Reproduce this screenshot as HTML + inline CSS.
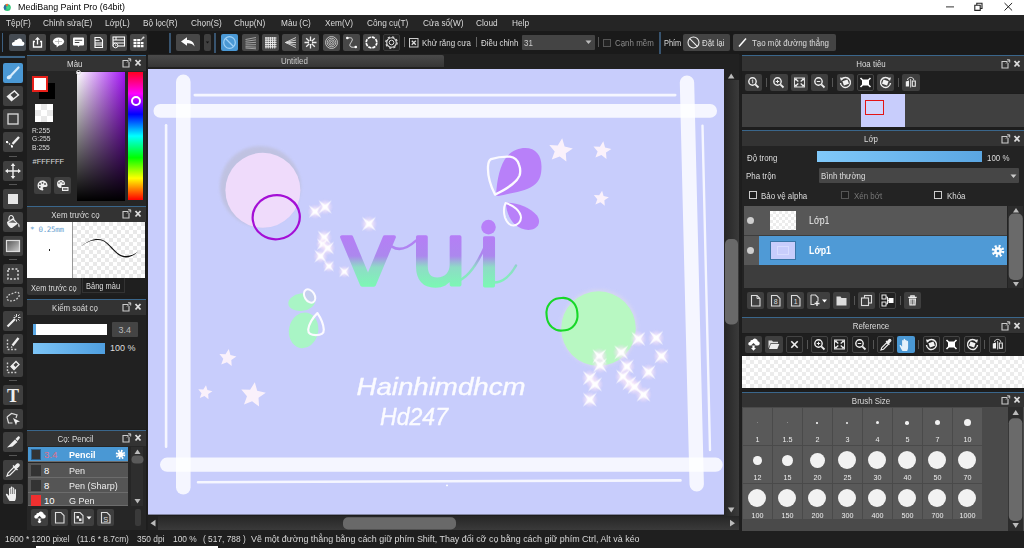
<!DOCTYPE html>
<html lang="vi">
<head>
<meta charset="utf-8">
<title>MediBang Paint Pro (64bit)</title>
<style>
*{box-sizing:border-box;margin:0;padding:0}
html,body{width:1024px;height:548px;overflow:hidden;background:#1e1e1e}
body{font-family:"Liberation Sans","DejaVu Sans",sans-serif;font-size:9px;color:#ddd;position:relative}
.abs,.abs>*{position:absolute}
#titlebar{left:0;top:0;width:1024px;height:15px;background:#fff;color:#000}
#titlebar .ttl{left:17.700px;top:1px;font-size:9.200px;line-height:13px;white-space:nowrap;transform:scaleX(.97);transform-origin:0 50%}
#menubar{left:0;top:15px;width:1024px;height:16px;background:#252525}
#menubar span{top:1px;font-size:9.500px;line-height:14px;color:#dcdcdc;white-space:nowrap;transform:scaleX(.87);transform-origin:0 50%}
#toolbar{left:0;top:31px;width:1024px;height:24px;background:#1a1a1a}
.tb{width:17px;height:17px;top:3px;background:#474747;border-radius:2px}
.tb.on{background:#4a98d4}
.tb svg{left:0;top:0;position:absolute}
.sx{display:inline-block;transform:scaleX(.88);transform-origin:0 50%}
.sxc{display:inline-block;transform:scaleX(.88);transform-origin:50% 50%}
.tbt{top:5.500px;font-size:9px;line-height:12px;color:#ddd;white-space:nowrap}
#tools{left:0;top:55px;width:26px;height:476px;background:#1d1d1d}
.tool{left:3px;width:20px;height:20px;background:#3f3f3f;border-radius:2px}
.tool.on{background:#4a98d4}
.tool svg{position:absolute;left:0;top:0}
.tsep{left:9px;width:8px;height:1px;background:#555}
.panel{background:#262626}
.phead{left:0;top:0;height:15px;background:#333;color:#ddd;font-size:9px;line-height:17px;text-align:center;overflow:hidden}
.chk4{--c:#ddd;background-color:#fff;background-image:linear-gradient(45deg,var(--c) 25%,transparent 25%,transparent 75%,var(--c) 75%),linear-gradient(45deg,var(--c) 25%,transparent 25%,transparent 75%,var(--c) 75%);background-size:6px 6px;background-position:0 0,3px 3px}
.hic{position:absolute}
.brow{left:2px;width:100px;height:15px;background:#555;border-bottom:1px solid #6c6c6c}
.brow *{position:absolute}
.brow i{left:2.500px;top:2px;width:10px;height:11px}
.brow b{left:16px;top:2px;font-size:9.500px;line-height:11px;font-weight:normal;color:#fff}
.brow em{left:40.500px;top:2px;font-size:9.500px;line-height:11px;font-style:normal;color:#eee;white-space:nowrap;transform:scaleX(.95);transform-origin:0 50%}
.tool.dk{background:#222;border:1px solid #444}
.tool.dk svg{left:-1px;top:-1px}
.chk5{background-color:#fff;background-image:linear-gradient(45deg,#ececec 25%,transparent 25%,transparent 75%,#ececec 75%),linear-gradient(45deg,#ececec 25%,transparent 25%,transparent 75%,#ececec 75%);background-size:8px 8px;background-position:0 0,4px 4px}
.bs{width:29px;background:#595959}
.bs *{position:absolute}
.bs i{border-radius:50%;background:#f2f2f2}
.bs b{left:0;width:29px;text-align:center;font-weight:normal;font-size:8px;line-height:10px;color:#eee;transform:scaleX(.9)}
.pline{height:1.500px;background:#3a668b}
#status{left:0;top:529.500px;width:1024px;height:18.500px;background:#1f1f1f;color:#d8d8d8}
#status span{top:2px;font-size:9.500px;line-height:13px;white-space:nowrap;transform:scaleX(.88);transform-origin:0 50%}
</style>
</head>
<body>
<div id="titlebar" class="abs">
  <svg style="left:3px;top:3px" width="9" height="9" viewBox="0 0 9 9"><circle cx="4.300" cy="4.400" r="3.500" fill="#36c67c"/><path d="M4.300 4.400L2.500 1.400A3.500 3.500 0 0 0 2 7.200Z" fill="#2c6fa8"/><path d="M4.300 4.400L2.300 1.500A3.500 3.500 0 0 1 5.200 1Z" fill="#ea6f3a"/><circle cx="4.900" cy="4.600" r="1.700" fill="#3fd98a"/></svg>
  <span class="ttl">MediBang Paint Pro (64bit)</span>
  <svg style="left:940px;top:0" width="84" height="15" viewBox="940 0 84 15"><path d="M946 6.900h8" stroke="#333" stroke-width="1" fill="none"/><path d="M974.800 5.200h5.400v5.200h-5.400z M976.800 5v-1.700h5.200v5.200h-1.700" stroke="#222" stroke-width="1.100" fill="none"/><path d="M1004.500 3l7.600 7.500M1012.100 3l-7.600 7.500" stroke="#222" stroke-width="1" fill="none"/></svg>
</div>
<div id="menubar" class="abs">
  <span style="left:6px">Tệp(F)</span><span style="left:43px">Chỉnh sửa(E)</span><span style="left:105px">Lớp(L)</span><span style="left:143px">Bộ lọc(R)</span><span style="left:191px">Chọn(S)</span><span style="left:234px">Chụp(N)</span><span style="left:281px">Màu (C)</span><span style="left:325px">Xem(V)</span><span style="left:367px">Công cụ(T)</span><span style="left:423px">Cửa sổ(W)</span><span style="left:476px">Cloud</span><span style="left:512px">Help</span>
</div>
<div id="toolbar" class="abs">
  <div style="left:2px;top:2px;width:1px;height:19px;background:#3d5f80"></div>
  <div style="left:149px;top:0;width:20px;height:23px;background:#181818"></div>
  <!-- file group -->
  <div class="tb" style="left:9px;background:#454b52"><svg width="17" height="17" viewBox="0 0 17 17"><path d="M4.500 12h8.500a2.300 2.300 0 0 0 .3-4.600a3 3 0 0 0-5.600-1.400a2 2 0 0 0-2.400 2a2 2 0 0 0-.8 4z" fill="#fff"/><path d="M4.500 12h8.500a2.300 2.300 0 0 0 1.500-.6h-11.500z" fill="#bcd8f2"/></svg></div>
  <div class="tb" style="left:29px"><svg width="17" height="17" viewBox="0 0 17 17"><path d="M6 7.500h-1.500v5.500h8v-5.500h-1.500" fill="none" stroke="#fff" stroke-width="1.300"/><path d="M8.500 10.500v-6.500" stroke="#fff" stroke-width="1.300"/><path d="M5.800 5.800l2.700-2.800l2.700 2.800z" fill="#fff"/></svg></div>
  <div class="tb" style="left:49.500px"><svg width="17" height="17" viewBox="0 0 17 17"><ellipse cx="8.500" cy="7.500" rx="5.600" ry="4" fill="#fff"/><path d="M6.500 10.500l.3 3l2.500-2.600z" fill="#fff"/><path d="M5 7.500h7M8.500 5v5" stroke="#aaa" stroke-width=".7"/></svg></div>
  <div class="tb" style="left:69.700px"><svg width="17" height="17" viewBox="0 0 17 17"><rect x="3" y="3.500" width="11" height="8" rx="1" fill="#fff"/><path d="M7.300 11.300l1.200 1.700l1.200-1.700z" fill="#fff"/><path d="M4.800 6.200h7.400M4.800 8.500h4.500" stroke="#474747" stroke-width="1.100"/></svg></div>
  <div class="tb" style="left:90px"><svg width="17" height="17" viewBox="0 0 17 17"><path d="M5 3.500h5.200l2.300 2.300v7.700h-7.500z" fill="none" stroke="#fff" stroke-width="1.100"/><path d="M5 6.300h4.500M5 9h7.500M5 11h7.500" stroke="#fff" stroke-width="1"/></svg></div>
  <div class="tb" style="left:110px"><svg width="17" height="17" viewBox="0 0 17 17"><rect x="3" y="3" width="11.500" height="9" fill="none" stroke="#fff" stroke-width="1.100"/><path d="M3 6h11.500M3 9h11.500M6 3v3" stroke="#fff" stroke-width="1"/><circle cx="5.500" cy="11.500" r="2.300" fill="#474747" stroke="#fff" stroke-width=".9"/><path d="M5.500 10.300v1.300h1.100" stroke="#fff" stroke-width=".7" fill="none"/></svg></div>
  <div class="tb" style="left:130.300px"><svg width="17" height="17" viewBox="0 0 17 17"><path d="M3.500 5h3v2.300h-3zM7.200 5h3v2.300h-3zM3.500 8h3v2.300h-3zM7.200 8h3v2.300h-3zM10.900 8h2.600v2.300h-2.600zM3.500 11h3v2.300h-3zM7.200 11h3v2.300h-3zM10.900 11h2.600v2.300h-2.600z" fill="#fff"/><path d="M10.500 6.500l2.800-2.800" stroke="#ccc" stroke-width="1.200"/><circle cx="13.500" cy="3.500" r="1" fill="#ddd"/></svg></div>
  <!-- undo group -->
  <div style="left:169px;top:2px;width:1.500px;height:20px;background:#38546f"></div>
  <div class="tb" style="left:175.500px;width:24px"><svg width="24" height="17" viewBox="0 0 24 17"><path d="M5 7.500l6-4.200v2.700c4.500 0 7 2.200 7.500 6.500c-1.500-2.300-3.700-3.300-7.500-3.200v2.500z" fill="#fff"/></svg></div>
  <div class="tb" style="left:204px;width:6.500px;background:#3f3f3f"><svg width="7" height="17" viewBox="0 0 7 17"><path d="M1.800 7.500h3.400l-1.700 2z" fill="#111"/></svg></div>
  <div style="left:214px;top:2px;width:1.500px;height:20px;background:#38546f"></div>
  <!-- snap group -->
  <div class="tb on" style="left:221px"><svg width="17" height="17" viewBox="0 0 17 17"><circle cx="8.500" cy="8.500" r="5.800" fill="none" stroke="#9fd0f5" stroke-width="1.200"/><path d="M4.500 4.500l8 8" stroke="#9fd0f5" stroke-width="1.200"/></svg></div>
  <div class="tb" style="left:241.500px"><svg width="17" height="17" viewBox="0 0 17 17"><path d="M3.500 5.500l10.500-2M3.500 7.300l10.500-1.400M3.500 9.100l10.500-.8M3.500 10.900l10.500-.2M3.500 12.700l10.500.4M3.500 14l10.500.8" stroke="#bbb" stroke-width=".8"/></svg></div>
  <div class="tb" style="left:261.700px"><svg width="17" height="17" viewBox="0 0 17 17"><path d="M4 3v11.500M6.200 3v11.500M8.400 3v11.500M10.600 3v11.500M12.800 3v11.500M3 4h11.500M3 6.200h11.500M3 8.400h11.500M3 10.600h11.500M3 12.800h11.500" stroke="#eee" stroke-width="1"/></svg></div>
  <div class="tb" style="left:282px"><svg width="17" height="17" viewBox="0 0 17 17"><path d="M3.500 8.500l10.500-5M3.500 8.500l10.500-2.500M3.500 8.500h10.500M3.500 8.500l10.500 2.500M3.500 8.500l10.500 5" stroke="#ddd" stroke-width=".9"/></svg></div>
  <div class="tb" style="left:302px"><svg width="17" height="17" viewBox="0 0 17 17"><path d="M8.500 2.500v4.500M8.500 10v4.500M2.500 8.500h4.500M10 8.500h4.500M4.200 4.200l3.100 3.100M9.700 9.700l3.100 3.100M12.800 4.200l-3.100 3.100M7.300 9.700l-3.100 3.100" stroke="#eee" stroke-width="1.300"/></svg></div>
  <div class="tb" style="left:322.500px"><svg width="17" height="17" viewBox="0 0 17 17"><g fill="none" stroke="#ddd" stroke-width=".8"><circle cx="8.500" cy="8.500" r="6"/><circle cx="8.500" cy="8.500" r="4.300"/><circle cx="8.500" cy="8.500" r="2.700"/><circle cx="8.500" cy="8.500" r="1.100"/></g></svg></div>
  <div class="tb" style="left:342.700px"><svg width="17" height="17" viewBox="0 0 17 17"><path d="M4.500 4c5-1 6 1 3.500 4.500s-1 5.500 4.500 4.500" fill="none" stroke="#ddd" stroke-width="1"/><circle cx="4.300" cy="4" r="1.300" fill="#fff"/><circle cx="12.800" cy="13" r="1.300" fill="#fff"/></svg></div>
  <div class="tb" style="left:363px"><svg width="17" height="17" viewBox="0 0 17 17"><circle cx="8.500" cy="8.500" r="5.300" fill="none" stroke="#fff" stroke-width="1.700" stroke-dasharray="3.200 .9"/></svg></div>
  <div class="tb" style="left:383px;background:#262626;border:1px solid #3a3a3a"><svg width="15" height="15" viewBox="1 1 15 15"><circle cx="8.500" cy="8.500" r="4.800" fill="none" stroke="#ddd" stroke-width="1.100"/><circle cx="8.500" cy="8.500" r="5.700" fill="none" stroke="#ddd" stroke-width="1.200" stroke-dasharray="2.200 2.270"/><circle cx="8.500" cy="8.500" r="2.300" fill="none" stroke="#ddd" stroke-width="1"/></svg></div>
  <div style="left:404px;top:6px;width:1px;height:10px;background:#666"></div>
  <svg style="left:409px;top:7px" width="10" height="10" viewBox="0 0 10 10"><rect x=".5" y=".5" width="8.500" height="8.500" fill="#222" stroke="#ccc" stroke-width="1"/><path d="M2.800 2.800l4 4M6.800 2.800l-4 4" stroke="#ddd" stroke-width="1.300"/></svg>
  <span class="tbt sx" style="left:421.500px">Khử răng cưa</span>
  <div style="left:475.500px;top:6px;width:1px;height:10px;background:#666"></div>
  <span class="tbt sx" style="left:481px">Điều chỉnh</span>
  <div style="left:521.700px;top:3.500px;width:73px;height:15.500px;background:#444;border-radius:1px"></div>
  <span class="tbt sx" style="left:524px;color:#ccc">31</span>
  <svg style="left:585px;top:9px" width="7" height="5" viewBox="0 0 7 5"><path d="M.5 .5h6l-3 3.500z" fill="#bbb"/></svg>
  <div style="left:597.500px;top:6px;width:1px;height:10px;background:#555"></div>
  <div style="left:602.500px;top:7.500px;width:8.500px;height:8.500px;border:1px solid #555;background:#222"></div>
  <span class="tbt sx" style="left:615px;color:#8a8a8a">Cạnh mềm</span>
  <div style="left:659px;top:1px;width:1.500px;height:22px;background:#38546f"></div>
  <span class="tbt sx" style="left:663.700px;transform:scaleX(.82)">Phím</span>
  <div class="tb" style="left:682.500px;width:47.500px;background:#444"><svg width="17" height="17" viewBox="0 0 17 17" style="left:2px"><circle cx="8.500" cy="8.500" r="5.500" fill="none" stroke="#eee" stroke-width="1.100"/><path d="M4.700 4.700l7.600 7.600" stroke="#eee" stroke-width="1.100"/></svg></div>
  <span class="tbt sx" style="left:701.500px">Đặt lại</span>
  <div class="tb" style="left:733px;width:103px;background:#444"><svg width="14" height="17" viewBox="0 0 14 17" style="left:3px"><path d="M3 12.500l7-8" stroke="#fff" stroke-width="1.500"/></svg></div>
  <span class="tbt sx" style="left:752px">Tạo một đường thẳng</span>
</div>
<div id="tools" class="abs">
  <div style="left:0;top:1px;width:25px;height:1.500px;background:#3d6486"></div>
  <div class="tool on" style="top:7.5px"><svg width="20" height="20" viewBox="0 0 20 20"><path d="M15.500 4.500l-7.500 8" stroke="#d8ecfb" stroke-width="2.200" stroke-linecap="round"/><ellipse cx="6.200" cy="14.200" rx="2.600" ry="1.900" transform="rotate(-25 6.200 14.200)" fill="#d8ecfb"/></svg></div>
  <div class="tool" style="top:30.8px"><svg width="20" height="20" viewBox="0 0 20 20"><path d="M4.500 10.500l7-5.500l4 4l-7 5.500z" fill="none" stroke="#eee" stroke-width="1.400"/><path d="M4.500 10.500l2.500-2l4 4l-2.500 2z" fill="#eee"/></svg></div>
  <div class="tool" style="top:54.1px"><svg width="20" height="20" viewBox="0 0 20 20"><rect x="5" y="5" width="10" height="10" fill="none" stroke="#ddd" stroke-width="1.300"/></svg></div>
  <div class="tool" style="top:77.4px"><svg width="20" height="20" viewBox="0 0 20 20"><path d="M16 5l-6.500 7" stroke="#eee" stroke-width="2.400"/><path d="M4 10l5 4" stroke="#eee" stroke-width="1.200" stroke-dasharray="1.500 1"/><rect x="3" y="9" width="2" height="2" fill="#fff"/><rect x="8" y="13.500" width="2" height="2" fill="#fff"/></svg></div>
  <div class="tsep" style="top:100.7px"></div>
  <div class="tool" style="top:105.7px"><svg width="20" height="20" viewBox="0 0 20 20"><path d="M10 3.500v13M3.500 10h13" stroke="#eee" stroke-width="1.400"/><path d="M10 2l2.300 3h-4.600zM10 18l2.300-3h-4.600zM2 10l3-2.300v4.600zM18 10l-3-2.300v4.600z" fill="#eee"/></svg></div>
  <div class="tsep" style="top:129.0px"></div>
  <div class="tool" style="top:134.0px"><svg width="20" height="20" viewBox="0 0 20 20"><rect x="5" y="5" width="10" height="10" fill="#e6e6e6"/></svg></div>
  <div class="tool" style="top:157.3px"><svg width="20" height="20" viewBox="0 0 20 20"><path d="M4 10l6-4l5 5.500l-6 4.500c-2 .5-5-3-5-6z" fill="#eee"/><path d="M6 8.500c-.5-3 .5-5 2-5s2.500 1.500 3 4" fill="none" stroke="#eee" stroke-width="1.100"/><path d="M15.500 11c1 1.500 1.500 3 .7 4.500c-1-.5-1.200-2.500-.7-4.500z" fill="#eee"/><path d="M5.500 10.500l4.500-2.500l3.500 3z" fill="#666"/></svg></div>
  <div class="tool" style="top:180.6px"><svg width="20" height="20" viewBox="0 0 20 20"><defs><linearGradient id="gg" x1="0" y1="0" x2="1" y2="1"><stop offset="0" stop-color="#555"/><stop offset="1" stop-color="#ccc"/></linearGradient></defs><rect x="3.500" y="4.500" width="13" height="11" fill="url(#gg)" stroke="#ddd" stroke-width="1.200"/></svg></div>
  <div class="tsep" style="top:203.9px"></div>
  <div class="tool" style="top:208.9px"><svg width="20" height="20" viewBox="0 0 20 20"><rect x="5" y="5" width="10" height="10" fill="none" stroke="#ddd" stroke-width="1.500" stroke-dasharray="2 1.700"/></svg></div>
  <div class="tool" style="top:232.2px"><svg width="20" height="20" viewBox="0 0 20 20"><path d="M4 11c0-3 3-3.500 5.500-4.500s5-2.500 6.500 0s-2 6-5 7s-7 .5-7-2.500z" fill="none" stroke="#ccc" stroke-width="1.300" stroke-dasharray="1.800 1.500"/></svg></div>
  <div class="tool" style="top:255.5px"><svg width="20" height="20" viewBox="0 0 20 20"><path d="M4.500 15.500l7.500-7.500" stroke="#eee" stroke-width="2.200"/><path d="M13.500 3v3M13.500 8.500v2M10.500 6.500h2M15 6.500h2.500M11.500 4.500l1 1M15 5l1.500-1.500M15 8l1.500 1.500" stroke="#ddd" stroke-width="1"/></svg></div>
  <div class="tool" style="top:278.8px"><svg width="20" height="20" viewBox="0 0 20 20"><path d="M4.500 5.500v10h10" fill="none" stroke="#ccc" stroke-width="1.400" stroke-dasharray="1.800 1.600"/><path d="M15.500 4l-6 7.500" stroke="#eee" stroke-width="2.400"/><path d="M8.500 12l-.8 2l2-.8z" fill="#eee"/></svg></div>
  <div class="tool" style="top:302.1px"><svg width="20" height="20" viewBox="0 0 20 20"><path d="M4.500 5.500v10h10" fill="none" stroke="#ccc" stroke-width="1.400" stroke-dasharray="1.800 1.600"/><path d="M8 9.500l5-5l3 3l-5 5z" fill="none" stroke="#eee" stroke-width="1.300"/><path d="M8 9.500l2-2l3 3l-2 2z" fill="#eee"/></svg></div>
  <div class="tsep" style="top:325.4px"></div>
  <div class="tool" style="top:330.4px"><svg width="20" height="20" viewBox="0 0 20 20"><text x="10" y="16.500" text-anchor="middle" font-family="Liberation Serif,serif" font-weight="bold" font-size="18" fill="#eee">T</text></svg></div>
  <div class="tool" style="top:353.7px"><svg width="20" height="20" viewBox="0 0 20 20"><path d="M4 8l4.500-3.500l5.500 1.500l-1 3M4 8l1.500 6h4" fill="none" stroke="#ddd" stroke-width="1.200"/><path d="M10 9l7 3.500l-3 .8l-1 3z" fill="#eee"/></svg></div>
  <div class="tool" style="top:377.0px"><svg width="20" height="20" viewBox="0 0 20 20"><path d="M4 15.500l8-8l2.500 2.500l-5 4.500z" fill="#eee"/><path d="M12.500 7l2.500-2.500c1-.8 2.500.7 1.700 1.700l-2.200 2.800z" fill="#eee"/></svg></div>
  <div class="tsep" style="top:400.3px"></div>
  <div class="tool" style="top:405.3px"><svg width="20" height="20" viewBox="0 0 20 20"><path d="M4 16l1-3l6-6l2 2l-6 6z" fill="none" stroke="#eee" stroke-width="1.200"/><path d="M10 5.500l4.500 4.500M11.500 7l2.500-2.800c1.200-1.200 3 .6 1.800 1.800l-2.800 2.500z" stroke="#eee" stroke-width="1.300" fill="#eee"/></svg></div>
  <div class="tool" style="top:428.6px"><svg width="20" height="20" viewBox="0 0 20 20"><path d="M6.500 17c-1-1.500-2.500-4-3.500-6c-.5-1.200 1-1.700 1.700-.7l1.300 1.700v-7c0-1.200 1.600-1.200 1.700 0v-1.500c0-1.200 1.700-1.200 1.800 0v1c0-1.200 1.700-1.200 1.800 0v1.500c0-1.200 1.600-1.200 1.700 0v6.500c0 2-.5 3.500-1.200 4.500z" fill="#eee"/><path d="M7.700 5v5M9.500 4v6M11.300 4.500v5.500" stroke="#3f3f3f" stroke-width=".6"/></svg></div>
</div>
<!-- LEFT PANELS -->
<div id="leftp" class="abs" style="left:26px;top:55px;width:121px;height:476px;background:#1d1d1d">
  <!-- color panel: leftp origin = (26,55) -->
  <div class="pline" style="left:1px;top:0;width:119px"></div>
  <div class="phead" style="left:1px;top:1px;width:119px"><span class="sxc" style="position:relative;left:-12px">Màu</span></div>
  <svg class="hic" style="left:96px;top:3px" width="20" height="10" viewBox="0 0 20 10"><path d="M6 2.500h-5v6.500h6v-5" fill="none" stroke="#ccc" stroke-width="1.100"/><path d="M5 4.500l3.500-3.500M6 .8h2.700v2.700" fill="none" stroke="#ccc" stroke-width="1"/><path d="M13.500 2l5 5.500M18.500 2l-5 5.500" stroke="#ddd" stroke-width="1.800"/></svg>
  <div class="panel" style="left:1px;top:16px;width:119px;height:135px"></div>
  <div style="left:13px;top:28px;width:16px;height:16px;background:#000"></div>
  <div style="left:6px;top:21px;width:16px;height:16px;background:#fff;border:2px solid #e8201a"></div>
  <div class="chk4" style="left:8.500px;top:49px;width:18px;height:18px;background-size:12px 12px;background-position:0 0,6px 6px;--c:#e9e9e9"></div>
  <span class="sx" style="left:6px;top:72.400px;font-size:7.500px;line-height:8.100px;color:#ddd;transform:scaleX(.9)">R:255<br>G:255<br>B:255</span>
  <span style="left:6.500px;top:101.500px;font-size:7.500px;line-height:9px;color:#ddd">#FFFFFF</span>
  <div class="tool" style="left:8px;top:122px;width:17px;height:17px"><svg width="17" height="17" viewBox="0 0 17 17"><path d="M8.500 3.500a5 5 0 1 0 0 10c1.200 0 1-1.200.5-1.800s0-1.700 1.200-1.700h1.800c1 0 1.500-.8 1.500-1.700c0-2.800-2.300-4.800-5-4.800z" fill="#eee"/><circle cx="6" cy="7" r=".9" fill="#444"/><circle cx="8.500" cy="5.800" r=".9" fill="#444"/><circle cx="11" cy="7" r=".9" fill="#444"/><circle cx="5.800" cy="10" r=".9" fill="#444"/></svg></div>
  <div class="tool" style="left:28px;top:122px;width:17px;height:17px"><svg width="17" height="17" viewBox="0 0 17 17"><path d="M7 3a4 4 0 1 0 0 8c1 0 .8-1 .4-1.500s0-1.400 1-1.400h1.400c.8 0 1.200-.6 1.200-1.300c0-2.200-1.800-3.800-4-3.800z" fill="#eee"/><circle cx="5" cy="6" r=".8" fill="#444"/><circle cx="7" cy="4.800" r=".8" fill="#444"/><circle cx="9" cy="6" r=".8" fill="#444"/><rect x="8" y="10" width="6.500" height="4" fill="#eee"/><rect x="9" y="11" width="4.500" height="2" fill="#777"/></svg></div>
  <div style="left:51px;top:16.500px;width:48px;height:129px;background:linear-gradient(to bottom,rgba(0,0,0,0),#000),linear-gradient(to right,#fff,#a315f5)"></div>
  <div style="left:49.500px;top:15px;width:5px;height:5px;border-radius:50%;border:1px solid #ddd"></div>
  <div style="left:102px;top:17px;width:15px;height:128px;background:linear-gradient(to bottom,#ff0020 0%,#ff00ff 17%,#0000ff 33%,#00ffff 50%,#00ff00 67%,#ffff00 83%,#ff0000 100%)"></div>
  <div style="left:104.500px;top:40.500px;width:10.500px;height:10.500px;border-radius:50%;border:2px solid #fff"></div>
  <!-- brush preview panel -->
  <div class="pline" style="left:1px;top:151px;width:119px"></div>
  <div class="phead" style="left:1px;top:152px;width:119px"><span class="sxc" style="position:relative;left:-11px">Xem trước cọ</span></div>
  <svg class="hic" style="left:96px;top:154px" width="20" height="10" viewBox="0 0 20 10"><path d="M6 2.500h-5v6.500h6v-5" fill="none" stroke="#ccc" stroke-width="1.100"/><path d="M5 4.500l3.500-3.500M6 .8h2.700v2.700" fill="none" stroke="#ccc" stroke-width="1"/><path d="M13.500 2l5 5.500M18.500 2l-5 5.500" stroke="#ddd" stroke-width="1.800"/></svg>
  <div style="left:1px;top:167px;width:45px;height:55.500px;background:#fff"></div>
  <div style="left:46px;top:167px;width:1px;height:55.500px;background:#999"></div>
  <div class="chk4" style="left:47px;top:167px;width:72px;height:55.500px;background-size:8px 8px;background-position:0 0,4px 4px;--c:#e9e9e9"></div>
  <span style="left:4px;top:169.500px;font-size:7.500px;line-height:9px;color:#6b9fd0;font-family:'DejaVu Sans Mono','Liberation Mono',monospace;letter-spacing:-.3px">* 0.25mm</span>
  <div style="left:22.700px;top:194.200px;width:1.600px;height:1.600px;background:#222"></div>
  <svg style="left:47px;top:167px" width="72" height="56" viewBox="0 0 72 56"><path d="M8 24.500c6-5 11-7.500 17-7.500c7 0 11 5.500 16 10.500s8 6.500 12 6.500c4 0 8-1.500 12-4.500c-4 4-8 6-12 6c-5 0-8-2.500-13-7.500s-8-10-15-10c-6 0-11 2-17 6.500z" fill="#111"/></svg>
  <div style="left:1px;top:223px;width:119px;height:17px;background:#1f1f1f"></div>
  <div style="left:1px;top:223px;width:54px;height:16.500px;background:#343434;border-radius:0 0 2px 2px"></div>
  <span class="sx" style="left:5px;top:227.700px;font-size:8.500px;line-height:10px;color:#ddd">Xem trước cọ</span>
  <div style="left:56px;top:223px;width:42.500px;height:14.500px;border:1px solid #333;border-top:0"></div>
  <span class="sx" style="left:59.500px;top:226.400px;font-size:8.500px;line-height:10px;color:#ddd">Bảng màu</span>
  <!-- brush control -->
  <div class="pline" style="left:1px;top:244px;width:119px"></div>
  <div class="phead" style="left:1px;top:245px;width:119px"><span class="sxc" style="position:relative;left:-11px">Kiểm soát cọ</span></div>
  <svg class="hic" style="left:96px;top:247px" width="20" height="10" viewBox="0 0 20 10"><path d="M6 2.500h-5v6.500h6v-5" fill="none" stroke="#ccc" stroke-width="1.100"/><path d="M5 4.500l3.500-3.500M6 .8h2.700v2.700" fill="none" stroke="#ccc" stroke-width="1"/><path d="M13.500 2l5 5.500M18.500 2l-5 5.500" stroke="#ddd" stroke-width="1.800"/></svg>
  <div class="panel" style="left:1px;top:260px;width:119px;height:114px;background:#212121"></div>
  <div style="left:7px;top:269px;width:74px;height:11px;background:#fff;border-left:3.500px solid #5aa9e6"></div>
  <div style="left:86px;top:267px;width:25.500px;height:15px;background:#444;border-radius:1px"></div>
  <span style="left:86px;top:269.500px;width:25.500px;text-align:center;font-size:9px;line-height:10px;color:#bbb">3.4</span>
  <div style="left:7px;top:287.500px;width:72px;height:11.500px;background:linear-gradient(to right,#7cc4f6,#4f9fe0)"></div>
  <span style="left:84px;top:288px;font-size:9px;line-height:10px;color:#ddd">100 %</span>
  <!-- brush list -->
  <div class="pline" style="left:1px;top:375px;width:119px"></div>
  <div class="phead" style="left:1px;top:376px;width:119px"><span class="sxc" style="position:relative;left:-11px">Cọ: Pencil</span></div>
  <svg class="hic" style="left:96px;top:378px" width="20" height="10" viewBox="0 0 20 10"><path d="M6 2.500h-5v6.500h6v-5" fill="none" stroke="#ccc" stroke-width="1.100"/><path d="M5 4.500l3.500-3.500M6 .8h2.700v2.700" fill="none" stroke="#ccc" stroke-width="1"/><path d="M13.500 2l5 5.500M18.500 2l-5 5.500" stroke="#ddd" stroke-width="1.800"/></svg>
  <div class="panel" style="left:1px;top:391px;width:119px;height:85px;background:#262626"></div>
  <div class="brow" style="top:392px;background:#4a98d4"><i style="background:#333;border:1px solid #2c5f8a"></i><b style="color:#e0708c;font-weight:normal">3.4</b><em style="font-weight:bold;color:#fff">Pencil</em></div>
  <div class="brow" style="top:407.500px"><i style="background:#333"></i><b>8</b><em>Pen</em></div>
  <div class="brow" style="top:422.500px"><i style="background:#333"></i><b>8</b><em>Pen (Sharp)</em></div>
  <div class="brow" style="top:437.500px;height:13.500px"><i style="background:#f03030"></i><b>10</b><em>G Pen</em></div>
  <svg style="left:89px;top:394px" width="11" height="11" viewBox="0 0 11 11"><circle cx="5.500" cy="5.500" r="3.600" fill="none" stroke="#fff" stroke-width="2.400" stroke-dasharray="1.500 1.330"/><circle cx="5.500" cy="5.500" r="2.800" fill="#fff"/></svg>
  <div style="left:104.500px;top:392px;width:12.500px;height:59px;background:#2e2e2e"></div>
  <svg style="left:104.500px;top:392px" width="13" height="59" viewBox="0 0 13 59"><path d="M3.500 7l3-4.500l3 4.500z" fill="#bbb"/><path d="M3.500 52l3 4.500l3-4.500z" fill="#bbb"/><rect x=".5" y="8.500" width="12" height="8" rx="4" fill="#5a5a5a"/></svg>
  <div class="tool" style="left:5px;top:454px;width:17px;height:17px"><svg width="17" height="17" viewBox="0 0 17 17"><path d="M4.500 9.500h8a2.100 2.100 0 0 0 .3-4.200a2.800 2.800 0 0 0-5.300-1.200a1.900 1.900 0 0 0-2.300 1.900a1.800 1.800 0 0 0-.7 3.500z" fill="#fff"/><path d="M8.500 14v-5" stroke="#fff" stroke-width="2"/><path d="M6 9.500l2.500-2.800l2.500 2.800z" fill="#3f3f3f"/><path d="M6.500 12l2 2.300l2-2.300z" fill="#fff"/></svg></div>
  <div class="tool" style="left:25px;top:454px;width:17px;height:17px"><svg width="17" height="17" viewBox="0 0 17 17"><path d="M4.500 3.500h5.500l3 3v7.500h-8.500z" fill="none" stroke="#ddd" stroke-width="1.100"/></svg></div>
  <div class="tool" style="left:45px;top:454px;width:23px;height:17px"><svg width="23" height="17" viewBox="0 0 23 17"><path d="M3.500 3.500h5.500l3 3v7.500h-8.500z" fill="none" stroke="#ddd" stroke-width="1.100"/><path d="M5.500 7h2.500v2.500h-2.500zM8 9.500h2.500v2.500h-2.500z" fill="#eee"/><path d="M15.500 7.500h5l-2.500 3z" fill="#fff"/></svg></div>
  <div class="tool" style="left:70.500px;top:454px;width:17px;height:17px"><svg width="17" height="17" viewBox="0 0 17 17"><path d="M4.500 3.500h5.500l3 3v7.500h-8.500z" fill="none" stroke="#ddd" stroke-width="1.100"/><text x="8.700" y="12.500" text-anchor="middle" font-size="7.500" font-family="Liberation Sans,sans-serif" fill="#ddd">S</text></svg></div>
  <div style="left:108.500px;top:454px;width:6px;height:17px;background:#3a3a3a;border-radius:2px"></div>
</div>
<!-- CANVAS -->
<div id="canvasarea" class="abs" style="left:148px;top:55px;width:591px;height:476px;background:#1d1d1d">
  <!-- canvasarea origin = (148,55) -->
  <div style="left:0;top:-1px;width:591px;height:15.500px;background:#212121"></div>
  <div style="left:0;top:-.5px;width:296px;height:12.500px;background:linear-gradient(to bottom,#4a4a4a,#363636);border-radius:0 2px 0 0"></div>
  <span class="sx" style="left:133px;top:1px;font-size:9px;line-height:11px;color:#ccc">Untitled</span>
<svg style="left:0;top:14.400px" width="575.500" height="445.600" viewBox="148 69.400 575.500 445.600">
<defs><radialGradient id="glow"><stop offset="0" stop-color="#fff" stop-opacity=".95"/><stop offset=".4" stop-color="#faeaf9" stop-opacity=".75"/><stop offset=".75" stop-color="#f3e0f8" stop-opacity=".3"/><stop offset="1" stop-color="#f0dcf8" stop-opacity="0"/></radialGradient>
<linearGradient id="vg" gradientUnits="userSpaceOnUse" x1="0" y1="236" x2="0" y2="287"><stop offset="0" stop-color="#b57ef6"/><stop offset=".40" stop-color="#ac88ee"/><stop offset=".62" stop-color="#8edcc6"/><stop offset="1" stop-color="#7cf7b4"/></linearGradient><filter id="sb" x="-5%" y="-5%" width="110%" height="110%"><feGaussianBlur stdDeviation=".65"/></filter><filter id="sb2" x="-20%" y="-20%" width="140%" height="140%"><feGaussianBlur stdDeviation="1.500"/></filter></defs>
<rect x="148" y="69" width="576" height="446" fill="#c8cdfc"/>
<circle cx="260.300" cy="186.800" r="40.500" fill="#bfc1df" opacity=".9" filter="url(#sb2)"/>
<circle cx="262.900" cy="190.700" r="37.500" fill="#efdbfb"/>
<circle cx="599" cy="328.500" r="39" fill="#d8d8f0" opacity=".7" filter="url(#sb2)"/>
<circle cx="598.500" cy="329" r="37.300" fill="#b8f8c2"/>
<rect x="176" y="75" width="14.600" height="420" rx="7.300" fill="#fff" fill-opacity=".82"/>
<rect x="153.500" y="104.400" width="563.500" height="13.800" rx="6.800" fill="#fff" fill-opacity=".82"/>
<rect x="160" y="458" width="562.800" height="14.200" rx="7.100" fill="#fff" fill-opacity=".82"/>
<line x1="687" y1="83" x2="696.700" y2="484.700" stroke="#fff" stroke-opacity=".82" stroke-width="14.400" stroke-linecap="round"/>
<rect x="193.500" y="94.200" width="483" height="2.600" rx="1.300" fill="#fff" fill-opacity=".82"/>
<line x1="198" y1="482.600" x2="680.500" y2="480.800" stroke="#fff" stroke-opacity=".82" stroke-width="2.600" stroke-linecap="round"/>
<rect x="164.800" y="124.400" width="2.600" height="324" rx="1.300" fill="#fff" fill-opacity=".82"/>
<line x1="702.500" y1="126" x2="710" y2="450.500" stroke="#fff" stroke-opacity=".82" stroke-width="2.400" stroke-linecap="round"/>
<ellipse cx="276.200" cy="217.600" rx="23.600" ry="22" fill="none" stroke="#a40fd6" stroke-width="2.200" transform="rotate(-8 276.500 217.400)"/>
<rect x="546.600" y="298.400" width="30.800" height="32.500" rx="14" ry="15" fill="none" stroke="#18d828" stroke-width="2.100" transform="rotate(-6 562 314.600)"/>
<path d="M496 196C497 180 500 165 507 157C512 151 519 148.500 525 148.500C536 148.500 541.500 156 541.500 167C541.500 175 540 180 536 184C530 190 520 192 510 194C504 195.500 499 197 496 196Z" fill="#b880f9"/>
<path d="M495 195C491 187 487.500 176 488 167C488.200 163 489 160.500 491 159.500C497 157.500 504 156.800 510 157C514 157.500 517.500 160 519 165C520.500 169 520.500 173 519.500 176C517 182 511 187 495 195Z" fill="none" stroke="#fbfaff" stroke-width="2.300" stroke-linejoin="round"/>
<path d="M506 203C516 203 530 207 537 216C541 222 539 228 532 230C526 231.500 520 229 515 225C509 219 506 211 506 203Z" fill="#b880f9"/>
<path d="M505.500 203.500C503.500 208 503.500 213 505 218C507 223 510 226 513.500 226C518 225.500 521 222 521 218C520.500 212 514 205.500 505.500 203.500Z" fill="none" stroke="#fbfaff" stroke-width="2" stroke-linejoin="round"/>
<circle cx="488.500" cy="227.500" r="7.300" fill="#b880f9"/>
<ellipse cx="301.700" cy="302.600" rx="13.500" ry="8.700" fill="#a9f5c5" transform="rotate(-8 301.700 302.600)"/>
<ellipse cx="303.600" cy="330.700" rx="14.600" ry="18" fill="#a9f5c5" transform="rotate(12 303.600 330.700)"/>
<ellipse cx="309.600" cy="296.400" rx="5" ry="7.200" fill="#c6cfee" stroke="#fbfaff" stroke-width="2" transform="rotate(-32 309.600 296.400)"/>
<path d="M317.400 313.500C320.500 318 323.500 325 323.800 330C324 334 321 335.500 316 335.500C311 335.500 308 334 308.200 330C308.500 325 313 317.500 317.400 313.500Z" fill="none" stroke="#fbfaff" stroke-width="2.200" stroke-linejoin="round"/>
<polygon points="562.2,138.6 564.6,146.8 572.8,148.8 565.8,153.6 566.4,162.0 559.7,156.8 551.8,160.0 554.7,152.0 549.3,145.5 557.7,145.8" fill="#faf1fb"/>
<polygon points="603.3,141.6 605.1,147.8 611.4,149.4 606.0,153.0 606.5,159.4 601.4,155.4 595.4,157.8 597.6,151.8 593.5,146.8 599.9,147.1" fill="#faf1fb"/>
<polygon points="602.1,191.1 603.6,196.3 608.9,197.6 604.4,200.6 604.8,206.1 600.5,202.7 595.4,204.8 597.3,199.7 593.8,195.5 599.2,195.7" fill="#faf1fb"/>
<polygon points="228.8,349.5 230.4,355.4 236.4,356.8 231.3,360.3 231.7,366.3 226.9,362.6 221.2,364.9 223.3,359.1 219.4,354.5 225.5,354.7" fill="#faf1fb"/>
<polygon points="206.0,385.6 207.4,390.5 212.4,391.7 208.2,394.5 208.5,399.6 204.5,396.5 199.8,398.4 201.5,393.6 198.3,389.7 203.3,389.9" fill="#faf1fb"/>
<polygon points="254.8,382.6 257.2,391.1 265.8,393.2 258.5,398.2 259.1,407.0 252.1,401.6 244.0,404.9 247.0,396.6 241.3,389.8 250.1,390.1" fill="#faf1fb"/>
<g filter="url(#sb)">
<circle cx="315.0" cy="211.9" r="7.6" fill="url(#glow)"/><path d="M315.0 202.9L316.4 210.5L324.0 211.9L316.4 213.3L315.0 220.9L313.6 213.3L306.0 211.9L313.6 210.5Z" fill="#fff" opacity=".85" transform="rotate(45 315.0 211.9)"/><circle cx="315.0" cy="211.9" r="1.8" fill="#fff" opacity=".9"/>
<circle cx="325.1" cy="207.3" r="8.1" fill="url(#glow)"/><path d="M325.1 197.8L326.6 205.8L334.6 207.3L326.6 208.8L325.1 216.8L323.6 208.8L315.6 207.3L323.6 205.8Z" fill="#fff" opacity=".85" transform="rotate(45 325.1 207.3)"/><circle cx="325.1" cy="207.3" r="1.9" fill="#fff" opacity=".9"/>
<circle cx="368.9" cy="224.3" r="8.5" fill="url(#glow)"/><path d="M368.9 214.3L370.5 222.7L378.9 224.3L370.5 225.9L368.9 234.3L367.3 225.9L358.9 224.3L367.3 222.7Z" fill="#fff" opacity=".85" transform="rotate(45 368.9 224.3)"/><circle cx="368.9" cy="224.3" r="2.0" fill="#fff" opacity=".9"/>
<circle cx="324.2" cy="237.8" r="8.1" fill="url(#glow)"/><path d="M324.2 228.3L325.7 236.3L333.7 237.8L325.7 239.3L324.2 247.3L322.7 239.3L314.7 237.8L322.7 236.3Z" fill="#fff" opacity=".85" transform="rotate(45 324.2 237.8)"/><circle cx="324.2" cy="237.8" r="1.9" fill="#fff" opacity=".9"/>
<circle cx="322.4" cy="244.7" r="6.8" fill="url(#glow)"/><path d="M322.4 236.7L323.7 243.4L330.4 244.7L323.7 246.0L322.4 252.7L321.1 246.0L314.4 244.7L321.1 243.4Z" fill="#fff" opacity=".85" transform="rotate(45 322.4 244.7)"/><circle cx="322.4" cy="244.7" r="1.6" fill="#fff" opacity=".9"/>
<circle cx="327.8" cy="248.4" r="7.6" fill="url(#glow)"/><path d="M327.8 239.4L329.2 247.0L336.8 248.4L329.2 249.8L327.8 257.4L326.4 249.8L318.8 248.4L326.4 247.0Z" fill="#fff" opacity=".85" transform="rotate(45 327.8 248.4)"/><circle cx="327.8" cy="248.4" r="1.8" fill="#fff" opacity=".9"/>
<circle cx="320.5" cy="256.6" r="7.6" fill="url(#glow)"/><path d="M320.5 247.6L321.9 255.2L329.5 256.6L321.9 258.0L320.5 265.6L319.1 258.0L311.5 256.6L319.1 255.2Z" fill="#fff" opacity=".85" transform="rotate(45 320.5 256.6)"/><circle cx="320.5" cy="256.6" r="1.8" fill="#fff" opacity=".9"/>
<circle cx="328.8" cy="266.6" r="6.4" fill="url(#glow)"/><path d="M328.8 259.1L330.0 265.4L336.3 266.6L330.0 267.8L328.8 274.1L327.6 267.8L321.3 266.6L327.6 265.4Z" fill="#fff" opacity=".85" transform="rotate(45 328.8 266.6)"/><circle cx="328.8" cy="266.6" r="1.5" fill="#fff" opacity=".9"/>
<circle cx="344.3" cy="272.1" r="6.4" fill="url(#glow)"/><path d="M344.3 264.6L345.5 270.9L351.8 272.1L345.5 273.3L344.3 279.6L343.1 273.3L336.8 272.1L343.1 270.9Z" fill="#fff" opacity=".85" transform="rotate(45 344.3 272.1)"/><circle cx="344.3" cy="272.1" r="1.5" fill="#fff" opacity=".9"/>
<circle cx="638.4" cy="339.3" r="8.5" fill="url(#glow)"/><path d="M638.4 329.3L640.0 337.7L648.4 339.3L640.0 340.9L638.4 349.3L636.8 340.9L628.4 339.3L636.8 337.7Z" fill="#fff" opacity=".85" transform="rotate(45 638.4 339.3)"/><circle cx="638.4" cy="339.3" r="2.0" fill="#fff" opacity=".9"/>
<circle cx="656.2" cy="338.3" r="8.5" fill="url(#glow)"/><path d="M656.2 328.3L657.8 336.7L666.2 338.3L657.8 339.9L656.2 348.3L654.6 339.9L646.2 338.3L654.6 336.7Z" fill="#fff" opacity=".85" transform="rotate(45 656.2 338.3)"/><circle cx="656.2" cy="338.3" r="2.0" fill="#fff" opacity=".9"/>
<circle cx="661.4" cy="356.6" r="8.5" fill="url(#glow)"/><path d="M661.4 346.6L663.0 355.0L671.4 356.6L663.0 358.2L661.4 366.6L659.8 358.2L651.4 356.6L659.8 355.0Z" fill="#fff" opacity=".85" transform="rotate(45 661.4 356.6)"/><circle cx="661.4" cy="356.6" r="2.0" fill="#fff" opacity=".9"/>
<circle cx="599.3" cy="356.6" r="8.5" fill="url(#glow)"/><path d="M599.3 346.6L600.9 355.0L609.3 356.6L600.9 358.2L599.3 366.6L597.7 358.2L589.3 356.6L597.7 355.0Z" fill="#fff" opacity=".85" transform="rotate(45 599.3 356.6)"/><circle cx="599.3" cy="356.6" r="2.0" fill="#fff" opacity=".9"/>
<circle cx="621.2" cy="352.8" r="8.5" fill="url(#glow)"/><path d="M621.2 342.8L622.8 351.2L631.2 352.8L622.8 354.4L621.2 362.8L619.6 354.4L611.2 352.8L619.6 351.2Z" fill="#fff" opacity=".85" transform="rotate(45 621.2 352.8)"/><circle cx="621.2" cy="352.8" r="2.0" fill="#fff" opacity=".9"/>
<circle cx="600.0" cy="365.6" r="8.5" fill="url(#glow)"/><path d="M600.0 355.6L601.6 364.0L610.0 365.6L601.6 367.2L600.0 375.6L598.4 367.2L590.0 365.6L598.4 364.0Z" fill="#fff" opacity=".85" transform="rotate(45 600.0 365.6)"/><circle cx="600.0" cy="365.6" r="2.0" fill="#fff" opacity=".9"/>
<circle cx="626.9" cy="366.9" r="8.5" fill="url(#glow)"/><path d="M626.9 356.9L628.5 365.3L636.9 366.9L628.5 368.5L626.9 376.9L625.3 368.5L616.9 366.9L625.3 365.3Z" fill="#fff" opacity=".85" transform="rotate(45 626.9 366.9)"/><circle cx="626.9" cy="366.9" r="2.0" fill="#fff" opacity=".9"/>
<circle cx="648.6" cy="372.5" r="8.5" fill="url(#glow)"/><path d="M648.6 362.5L650.2 370.9L658.6 372.5L650.2 374.1L648.6 382.5L647.0 374.1L638.6 372.5L647.0 370.9Z" fill="#fff" opacity=".85" transform="rotate(45 648.6 372.5)"/><circle cx="648.6" cy="372.5" r="2.0" fill="#fff" opacity=".9"/>
<circle cx="589.8" cy="378.4" r="8.5" fill="url(#glow)"/><path d="M589.8 368.4L591.4 376.8L599.8 378.4L591.4 380.0L589.8 388.4L588.2 380.0L579.8 378.4L588.2 376.8Z" fill="#fff" opacity=".85" transform="rotate(45 589.8 378.4)"/><circle cx="589.8" cy="378.4" r="2.0" fill="#fff" opacity=".9"/>
<circle cx="623.0" cy="377.0" r="8.5" fill="url(#glow)"/><path d="M623.0 367.0L624.6 375.4L633.0 377.0L624.6 378.6L623.0 387.0L621.4 378.6L613.0 377.0L621.4 375.4Z" fill="#fff" opacity=".85" transform="rotate(45 623.0 377.0)"/><circle cx="623.0" cy="377.0" r="2.0" fill="#fff" opacity=".9"/>
<circle cx="595.0" cy="384.8" r="8.5" fill="url(#glow)"/><path d="M595.0 374.8L596.6 383.2L605.0 384.8L596.6 386.4L595.0 394.8L593.4 386.4L585.0 384.8L593.4 383.2Z" fill="#fff" opacity=".85" transform="rotate(45 595.0 384.8)"/><circle cx="595.0" cy="384.8" r="2.0" fill="#fff" opacity=".9"/>
<circle cx="629.4" cy="383.5" r="8.5" fill="url(#glow)"/><path d="M629.4 373.5L631.0 381.9L639.4 383.5L631.0 385.1L629.4 393.5L627.8 385.1L619.4 383.5L627.8 381.9Z" fill="#fff" opacity=".85" transform="rotate(45 629.4 383.5)"/><circle cx="629.4" cy="383.5" r="2.0" fill="#fff" opacity=".9"/>
<circle cx="643.5" cy="395.0" r="8.5" fill="url(#glow)"/><path d="M643.5 385.0L645.1 393.4L653.5 395.0L645.1 396.6L643.5 405.0L641.9 396.6L633.5 395.0L641.9 393.4Z" fill="#fff" opacity=".85" transform="rotate(45 643.5 395.0)"/><circle cx="643.5" cy="395.0" r="2.0" fill="#fff" opacity=".9"/>
<circle cx="589.8" cy="400.0" r="8.5" fill="url(#glow)"/><path d="M589.8 390.0L591.4 398.4L599.8 400.0L591.4 401.6L589.8 410.0L588.2 401.6L579.8 400.0L588.2 398.4Z" fill="#fff" opacity=".85" transform="rotate(45 589.8 400.0)"/><circle cx="589.8" cy="400.0" r="2.0" fill="#fff" opacity=".9"/>
<circle cx="634.5" cy="387.3" r="8.5" fill="url(#glow)"/><path d="M634.5 377.3L636.1 385.7L644.5 387.3L636.1 388.9L634.5 397.3L632.9 388.9L624.5 387.3L632.9 385.7Z" fill="#fff" opacity=".85" transform="rotate(45 634.5 387.3)"/><circle cx="634.5" cy="387.3" r="2.0" fill="#fff" opacity=".9"/>
</g>
<path d="M392 247c6 4 14 3 24-6M459 281c10-4 18-16 26-34M494 283c9 0 17-8 22-17" fill="none" stroke="url(#vg)" stroke-width="2.500" stroke-linecap="round"/>
<text x="339" y="285.500" textLength="58" lengthAdjust="spacingAndGlyphs" font-family="'DejaVu Sans','Liberation Sans',sans-serif" font-size="88" fill="url(#vg)" stroke="url(#vg)" stroke-width="3.400" stroke-linejoin="round">v</text>
<text x="410" y="285.500" textLength="58" lengthAdjust="spacingAndGlyphs" font-family="'DejaVu Sans','Liberation Sans',sans-serif" font-size="88" fill="url(#vg)" stroke="url(#vg)" stroke-width="3.400" stroke-linejoin="round">u</text>
<clipPath id="ic"><rect x="470" y="235.500" width="50" height="60"/></clipPath><text x="476" y="285.500" textLength="26" lengthAdjust="spacingAndGlyphs" clip-path="url(#ic)" font-family="'DejaVu Sans','Liberation Sans',sans-serif" font-size="88" fill="url(#vg)" stroke="url(#vg)" stroke-width="3.400" stroke-linejoin="round">i</text>
<text x="356.500" y="395" textLength="169" lengthAdjust="spacingAndGlyphs" font-size="23" font-family="'Liberation Sans','DejaVu Sans',sans-serif" font-style="italic" fill="#fbfbff" stroke="#fbfbff" stroke-width=".35">Hainhimdhcm</text>
<text x="380" y="425.500" textLength="68" lengthAdjust="spacingAndGlyphs" font-size="23" font-family="'Liberation Sans','DejaVu Sans',sans-serif" font-style="italic" fill="#fbfbff" stroke="#fbfbff" stroke-width=".35">Hd247</text>
<circle cx="447" cy="486" r="1" fill="#fff"/>
</svg>
  <!-- v scrollbar -->
  <div style="left:575.500px;top:14.500px;width:15px;height:446px;background:linear-gradient(to right,#262626,#3a3a3a)"></div>
  <div style="left:576px;top:14.500px;width:14.500px;height:10px;background:#222"></div>
  <svg style="left:576px;top:14.500px" width="15" height="446" viewBox="0 0 15 446"><path d="M4 8.500l3.200-5l3.200 5z" fill="#bbb"/><path d="M4 437.500l3.200 5l3.200-5z" fill="#bbb"/><rect x="1" y="169" width="13" height="85.500" rx="5" fill="#696969"/></svg>
  <!-- h scrollbar -->
  <div style="left:0;top:460.500px;width:591px;height:14.500px;background:linear-gradient(to bottom,#262626,#3a3a3a)"></div>
  <div style="left:0;top:460.500px;width:10px;height:14.500px;background:#222"></div>
  <svg style="left:0;top:460.500px" width="591" height="15" viewBox="0 0 591 15"><path d="M7.500 3.800l-5 3.400l5 3.400z" fill="#bbb"/><path d="M582 3.800l5 3.400l-5 3.400z" fill="#bbb"/><rect x="195" y="1.200" width="113" height="12.200" rx="5" fill="#696969"/></svg>
</div>
<!-- RIGHT PANELS -->
<div id="rightp" class="abs" style="left:741px;top:55px;width:283px;height:476px;background:#1d1d1d;z-index:3">
  <div class="pline" style="left:1px;top:0.0px;width:282px"></div>
  <div class="phead" style="left:1px;top:1.0px;width:282px"></div>
  <span class="sxc" style="left:90.0px;top:1.9px;width:80px;text-align:center;font-size:9px;line-height:15px;color:#ddd">Hoa tiêu</span>
  <svg class="hic" style="left:260.0px;top:3.5px" width="20" height="10" viewBox="0 0 20 10"><path d="M6 2.500h-5v6.500h6v-5" fill="none" stroke="#ccc" stroke-width="1.100"/><path d="M5 4.500l3.500-3.500M6 .8h2.700v2.700" fill="none" stroke="#ccc" stroke-width="1"/><path d="M13.500 2l5 5.500M18.500 2l-5 5.500" stroke="#ddd" stroke-width="1.800"/></svg>
  <div style="left:1px;top:16.0px;width:282px;height:22px;background:#1f1f1f"></div>
  <div class="tool " style="left:4.0px;top:18.5px;width:17.4px;height:17px"><svg width="17.4" height="17" viewBox="0 0 17.4 17"><circle cx="7.500" cy="7.500" r="3.700" fill="none" stroke="#eee" stroke-width="1.400"/><path d="M10.300 10.300l3.200 3.200" stroke="#eee" stroke-width="1.800"/><path d="M7.700 5.800v3.500M6.800 6.500l.9-.7" stroke="#eee" stroke-width=".9" fill="none"/></svg></div>
  <div style="left:25.3px;top:22.5px;width:1px;height:9px;background:#555"></div>
  <div class="tool " style="left:29.4px;top:18.5px;width:17.4px;height:17px"><svg width="17.4" height="17" viewBox="0 0 17.4 17"><circle cx="7.500" cy="7.500" r="3.700" fill="none" stroke="#eee" stroke-width="1.400"/><path d="M10.300 10.300l3.200 3.200" stroke="#eee" stroke-width="1.800"/><path d="M5.800 7.500h3.400M7.500 5.800v3.400" stroke="#eee" stroke-width="1"/></svg></div>
  <div class="tool " style="left:50.0px;top:18.5px;width:17.2px;height:17px"><svg width="17.2" height="17" viewBox="0 0 17.2 17"><rect x="3.500" y="4" width="10" height="9" fill="none" stroke="#ddd" stroke-width="1"/><path d="M4.500 5l2.800 2.500M12.500 5l-2.800 2.500M4.500 12l2.800-2.500M12.500 12l-2.800-2.500" stroke="#eee" stroke-width="1.300"/><path d="M4 4.500h2.500l-2.500 2.300zM13 4.500h-2.500l2.500 2.300zM4 12.500h2.500l-2.500-2.300zM13 12.500h-2.500l2.500-2.300z" fill="#eee"/></svg></div>
  <div class="tool " style="left:70.0px;top:18.5px;width:17.2px;height:17px"><svg width="17.2" height="17" viewBox="0 0 17.2 17"><circle cx="7.500" cy="7.500" r="3.700" fill="none" stroke="#eee" stroke-width="1.400"/><path d="M10.300 10.300l3.200 3.200" stroke="#eee" stroke-width="1.800"/><path d="M5.800 7.500h3.400" stroke="#eee" stroke-width="1"/></svg></div>
  <div style="left:91.2px;top:22.5px;width:1px;height:9px;background:#555"></div>
  <div class="tool " style="left:95.7px;top:18.5px;width:17.2px;height:17px"><svg width="17.2" height="17" viewBox="0 0 17.2 17"><path d="M4.500 5.500a5 5 0 1 1-1 3.500" fill="none" stroke="#eee" stroke-width="1.400"/><path d="M3 3.500l3.500 .5l-2.500 3z" fill="#eee"/><rect x="6" y="6.300" width="5.400" height="4.400" fill="#f2f2f2" transform="rotate(-20 8.700 8.500)"/></svg></div>
  <div class="tool dk" style="left:116.2px;top:18.5px;width:16.6px;height:17px"><svg width="16.6" height="17" viewBox="0 0 16.6 17"><rect x="5" y="5.500" width="7" height="6" fill="#fff"/><path d="M3.500 4l2 2M13.500 4l-2 2M3.500 13l2-2M13.500 13l-2-2" stroke="#fff" stroke-width="1.500"/></svg></div>
  <div class="tool " style="left:136.0px;top:18.5px;width:17.2px;height:17px"><svg width="17.2" height="17" viewBox="0 0 17.2 17"><path d="M12.500 5.500a5 5 0 1 0 1 3.500" fill="none" stroke="#eee" stroke-width="1.400"/><path d="M14 3.500l-3.500 .5l2.500 3z" fill="#eee"/><rect x="5.600" y="6.300" width="5.400" height="4.400" fill="#f2f2f2" transform="rotate(20 8.300 8.500)"/></svg></div>
  <div style="left:157.2px;top:22.5px;width:1px;height:9px;background:#555"></div>
  <div class="tool " style="left:161.3px;top:18.5px;width:17.4px;height:17px"><svg width="17.4" height="17" viewBox="0 0 17.4 17"><path d="M3.800 7.500l3.200-1v6h-3.200z" fill="#eee"/><path d="M10.300 7h3v5.300h-3z" fill="none" stroke="#eee" stroke-width="1.100"/><path d="M8.600 5v8.500" stroke="#ddd" stroke-width=".9"/><path d="M5.500 6c.3-3.500 6-3.500 6.300 0" fill="none" stroke="#ddd" stroke-width="1"/></svg></div>
  <div style="left:1px;top:38.5px;width:282px;height:33.500px;background:#404040"></div>
  <div style="left:120.2px;top:38.5px;width:43.800px;height:33.200px;background:#c8cdfc"></div>
  <div style="left:123.5px;top:45.2px;width:19.500px;height:14.400px;border:1.500px solid #e41414;background:rgba(255,255,255,.15)"></div>
  <div class="pline" style="left:1px;top:75.0px;width:282px"></div>
  <div class="phead" style="left:1px;top:76.0px;width:282px"></div>
  <span class="sxc" style="left:90.0px;top:76.9px;width:80px;text-align:center;font-size:9px;line-height:15px;color:#ddd">Lớp</span>
  <svg class="hic" style="left:260.0px;top:78.5px" width="20" height="10" viewBox="0 0 20 10"><path d="M6 2.500h-5v6.500h6v-5" fill="none" stroke="#ccc" stroke-width="1.100"/><path d="M5 4.500l3.500-3.500M6 .8h2.700v2.700" fill="none" stroke="#ccc" stroke-width="1"/><path d="M13.500 2l5 5.500M18.500 2l-5 5.500" stroke="#ddd" stroke-width="1.800"/></svg>
  <div style="left:1px;top:91.0px;width:282px;height:172px;background:#232323"></div>
  <span class="sx" style="left:5.5px;top:97.7px;font-size:9px;line-height:11px;color:#ddd">Độ trong</span>
  <div style="left:76.3px;top:96.4px;width:164.700px;height:10.800px;background:linear-gradient(to right,#80c9fa,#5aa6e2)"></div>
  <span class="sx" style="left:245.7px;top:97.7px;font-size:9px;line-height:11px;color:#ddd">100 %</span>
  <span class="sx" style="left:5.0px;top:116.2px;font-size:9px;line-height:11px;color:#ddd">Pha trộn</span>
  <div style="left:77.7px;top:112.9px;width:200.300px;height:15px;background:#464646;border-radius:1px"></div>
  <span class="sx" style="left:79.6px;top:115.8px;font-size:9px;line-height:11px;color:#ddd">Bình thường</span>
  <svg style="left:269.0px;top:118.5px" width="7" height="5" viewBox="0 0 7 5"><path d="M.5 .5h6l-3 3.500z" fill="#ccc"/></svg>
  <div style="left:7.9px;top:136.2px;width:8.200px;height:8.200px;border:1px solid #ccc;background:#1e1e1e"></div>
  <span class="sx" style="left:19.9px;top:135.5px;font-size:9px;line-height:11px;color:#ddd">Bảo vệ alpha</span>
  <div style="left:100.0px;top:136.2px;width:8.200px;height:8.200px;border:1px solid #555;background:#1e1e1e"></div>
  <span class="sx" style="left:112.9px;top:135.5px;font-size:9px;line-height:11px;color:#777">Xén bớt</span>
  <div style="left:193.0px;top:136.2px;width:8.200px;height:8.200px;border:1px solid #ccc;background:#1e1e1e"></div>
  <span class="sx" style="left:205.5px;top:135.5px;font-size:9px;line-height:11px;color:#ddd">Khóa</span>
  <div style="left:3.1px;top:151.1px;width:263px;height:82px;background:#3d3d3d"></div>
  <div style="left:3.1px;top:151.1px;width:263px;height:28.500px;background:#575757"></div>
  <div style="left:3.1px;top:181.1px;width:263px;height:28.500px;background:#575757"></div>
  <div style="left:17.6px;top:181.1px;width:248.500px;height:28.500px;background:#4f9ad6"></div>
  <div style="left:6.4px;top:162.3px;width:7px;height:7px;border-radius:50%;background:#cfcfcf"></div>
  <div style="left:6.4px;top:192.3px;width:7px;height:7px;border-radius:50%;background:#cfcfcf"></div>
  <div class="chk4" style="left:28.5px;top:156.0px;width:26.300px;height:19.200px;background-size:6px 6px;background-position:0 0,3px 3px;--c:#ececec"></div>
  <div style="left:28.5px;top:185.5px;width:26.300px;height:19.700px;background:#c8cdfc;border:1px solid #3a76a8"><div style="position:absolute;left:6px;top:4px;width:12px;height:9px;border:1px solid #d8dcff"></div></div>
  <span class="sx" style="left:67.7px;top:160.2px;font-size:10px;line-height:12px;color:#eee">Lớp1</span>
  <span class="sx" style="left:67.7px;top:190.2px;font-size:10px;line-height:12px;color:#fff;font-weight:bold">Lớp1</span>
  <svg style="left:249.5px;top:189.3px" width="14" height="14" viewBox="0 0 14 14"><circle cx="7" cy="7" r="4.800" fill="none" stroke="#fff" stroke-width="3" stroke-dasharray="1.900 1.870"/><circle cx="7" cy="7" r="3.800" fill="#fff"/><circle cx="7" cy="7" r="1.300" fill="#4f9ad6"/></svg>
  <div style="left:266.5px;top:151.1px;width:15.500px;height:82px;background:#2c2c2c"></div>
  <svg style="left:266.5px;top:151.1px" width="16" height="82" viewBox="0 0 16 82"><path d="M5 6.500l3-4.500l3 4.500z" fill="#bbb"/><path d="M5 76l3 4.500l3-4.500z" fill="#bbb"/><rect x=".8" y="7.500" width="14" height="66.500" rx="5" fill="#6a6a6a"/></svg>
  <div class="tool " style="left:6.4px;top:236.7px;width:16.6px;height:17px"><svg width="16.6" height="17" viewBox="0 0 16.6 17"><path d="M4.500 3.500h5.500l3 3v7.500h-8.500z" fill="none" stroke="#ddd" stroke-width="1.100"/><path d="M10 3.500v3h3" fill="none" stroke="#ddd" stroke-width=".9"/></svg></div>
  <div class="tool " style="left:26.3px;top:236.7px;width:16.6px;height:17px"><svg width="16.6" height="17" viewBox="0 0 16.6 17"><path d="M4.500 3.500h5.500l3 3v7.500h-8.500z" fill="none" stroke="#ddd" stroke-width="1.100"/><text x="8.700" y="12.500" text-anchor="middle" font-size="7" font-family="Liberation Sans,sans-serif" fill="#ddd">8</text></svg></div>
  <div class="tool " style="left:46.0px;top:236.7px;width:16.8px;height:17px"><svg width="16.8" height="17" viewBox="0 0 16.8 17"><path d="M4.500 3.500h5.500l3 3v7.500h-8.500z" fill="none" stroke="#ddd" stroke-width="1.100"/><text x="8.700" y="12.500" text-anchor="middle" font-size="7" font-family="Liberation Sans,sans-serif" fill="#ddd">1</text></svg></div>
  <div class="tool " style="left:66.2px;top:236.7px;width:23px;height:17px"><svg width="23" height="17" viewBox="0 0 23 17"><path d="M4 3h4.500l2.500 2.500v4M4 3v9.500h3.500" fill="none" stroke="#ddd" stroke-width="1.100"/><path d="M7.500 11.500h5M10 9v5" stroke="#eee" stroke-width="1.400"/><path d="M15 7.500h5l-2.500 3z" fill="#fff"/></svg></div>
  <div class="tool " style="left:92.0px;top:236.7px;width:17px;height:17px"><svg width="17" height="17" viewBox="0 0 17 17"><path d="M3.500 4.500h4l1 1.500h5v7.500h-10z" fill="#ddd"/></svg></div>
  <div style="left:113.2px;top:240.7px;width:1px;height:9px;background:#555"></div>
  <div class="tool " style="left:117.2px;top:236.7px;width:16.8px;height:17px"><svg width="16.8" height="17" viewBox="0 0 16.8 17"><rect x="6.500" y="3.500" width="7" height="7.500" fill="none" stroke="#ddd" stroke-width="1.100"/><rect x="3.500" y="6" width="7" height="7.500" fill="#3f3f3f" stroke="#ddd" stroke-width="1.100"/></svg></div>
  <div class="tool dk" style="left:137.8px;top:236.7px;width:16.8px;height:17px"><svg width="16.8" height="17" viewBox="0 0 16.8 17"><rect x="3" y="3" width="4" height="4" fill="none" stroke="#eee" stroke-width="1"/><rect x="3" y="10" width="4" height="4" fill="none" stroke="#eee" stroke-width="1"/><rect x="9.500" y="6" width="5" height="5" fill="#fff"/><path d="M7 5h1.500v7h-1.500M8.500 8.500h1.500" fill="none" stroke="#eee" stroke-width="1"/></svg></div>
  <div style="left:158.6px;top:240.7px;width:1px;height:9px;background:#555"></div>
  <div class="tool " style="left:163.0px;top:236.7px;width:17px;height:17px"><svg width="17" height="17" viewBox="0 0 17 17"><path d="M4.300 5.300h8.400M6.800 5v-1.200h3.400v1.200" fill="none" stroke="#eee" stroke-width="1.200"/><path d="M5 6.500h7l-.4 7h-6.200z" fill="#eee"/><path d="M7 7.500v5M8.500 7.500v5M10 7.500v5" stroke="#555" stroke-width=".8"/></svg></div>
  <div class="pline" style="left:1px;top:262.4px;width:282px"></div>
  <div class="phead" style="left:1px;top:263.4px;width:282px"></div>
  <span class="sxc" style="left:90.0px;top:264.3px;width:80px;text-align:center;font-size:9px;line-height:15px;color:#ddd">Reference</span>
  <svg class="hic" style="left:260.0px;top:265.9px" width="20" height="10" viewBox="0 0 20 10"><path d="M6 2.500h-5v6.500h6v-5" fill="none" stroke="#ccc" stroke-width="1.100"/><path d="M5 4.500l3.500-3.500M6 .8h2.700v2.700" fill="none" stroke="#ccc" stroke-width="1"/><path d="M13.500 2l5 5.500M18.500 2l-5 5.500" stroke="#ddd" stroke-width="1.800"/></svg>
  <div style="left:1px;top:278.6px;width:282px;height:22.600px;background:#1f1f1f"></div>
  <div class="tool " style="left:4.4px;top:281.0px;width:16.8px;height:17px"><svg width="16.8" height="17" viewBox="0 0 16.8 17"><path d="M4.500 9.500h8a2.100 2.100 0 0 0 .3-4.200a2.800 2.800 0 0 0-5.300-1.200a1.900 1.900 0 0 0-2.300 1.900a1.800 1.800 0 0 0-.7 3.500z" fill="#fff"/><path d="M8.500 13v-4.500" stroke="#fff" stroke-width="2.200"/><path d="M6 9.600l2.500-2.600l2.500 2.600z" fill="#3f3f3f"/><path d="M6 12l2.500 2.800l2.500-2.800z" fill="#fff"/></svg></div>
  <div class="tool " style="left:24.2px;top:281.0px;width:17.4px;height:17px"><svg width="17.4" height="17" viewBox="0 0 17.4 17"><path d="M3.500 4.500h3.500l1 1.300h5v1.500h-7.500l-2 5z" fill="#ddd"/><path d="M5.800 8h8.500l-2 5h-8.300z" fill="#eee"/></svg></div>
  <div class="tool dk" style="left:44.8px;top:281.0px;width:17.2px;height:17px"><svg width="17.2" height="17" viewBox="0 0 17.2 17"><path d="M5.300 5.300l6.400 6.400M11.700 5.300l-6.400 6.400" stroke="#eee" stroke-width="1.600"/></svg></div>
  <div style="left:66.0px;top:285.0px;width:1px;height:9px;background:#555"></div>
  <div class="tool dk" style="left:69.7px;top:281.0px;width:17.2px;height:17px"><svg width="17.2" height="17" viewBox="0 0 17.2 17"><circle cx="7.500" cy="7.500" r="3.700" fill="none" stroke="#eee" stroke-width="1.400"/><path d="M10.300 10.300l3.200 3.200" stroke="#eee" stroke-width="1.800"/><path d="M5.800 7.500h3.400M7.500 5.800v3.400" stroke="#eee" stroke-width="1"/></svg></div>
  <div class="tool dk" style="left:90.3px;top:281.0px;width:17.2px;height:17px"><svg width="17.2" height="17" viewBox="0 0 17.2 17"><rect x="3.500" y="4" width="10" height="9" fill="none" stroke="#ddd" stroke-width="1"/><path d="M4.500 5l2.800 2.500M12.500 5l-2.800 2.500M4.500 12l2.800-2.500M12.500 12l-2.800-2.500" stroke="#eee" stroke-width="1.300"/><path d="M4 4.500h2.500l-2.500 2.300zM13 4.500h-2.500l2.500 2.300zM4 12.500h2.500l-2.500-2.300zM13 12.500h-2.500l2.500-2.300z" fill="#eee"/></svg></div>
  <div class="tool dk" style="left:110.5px;top:281.0px;width:17.2px;height:17px"><svg width="17.2" height="17" viewBox="0 0 17.2 17"><circle cx="7.500" cy="7.500" r="3.700" fill="none" stroke="#eee" stroke-width="1.400"/><path d="M10.300 10.300l3.200 3.200" stroke="#eee" stroke-width="1.800"/><path d="M5.800 7.500h3.400" stroke="#eee" stroke-width="1"/></svg></div>
  <div style="left:131.7px;top:285.0px;width:1px;height:9px;background:#555"></div>
  <div class="tool dk" style="left:136.0px;top:281.0px;width:17px;height:17px"><svg width="17" height="17" viewBox="0 0 17 17"><path d="M4 14l.8-2.500l5-5l1.700 1.700l-5 5z" fill="none" stroke="#eee" stroke-width="1.100"/><path d="M9 5l3.500 3.500M10 6l2-2.300c1-1 2.600.5 1.600 1.600l-2.400 2z" stroke="#eee" stroke-width="1.100" fill="#eee"/></svg></div>
  <div class="tool on" style="left:156.3px;top:281.0px;width:17.3px;height:17px"><svg width="17.3" height="17" viewBox="0 0 17.3 17"><path d="M5.500 15c-.8-1.200-2-3.300-2.800-5c-.4-1 .8-1.400 1.400-.6l1 1.400v-6c0-1 1.400-1 1.500 0v-1.200c0-1 1.400-1 1.500 0v.8c0-1 1.400-1 1.500 0v1.200c0-1 1.400-1 1.500 0v5.500c0 1.700-.4 3-1 3.900z" fill="#e4f1fb"/></svg></div>
  <div style="left:177.4px;top:285.0px;width:1px;height:9px;background:#555"></div>
  <div class="tool dk" style="left:182.0px;top:281.0px;width:16.8px;height:17px"><svg width="16.8" height="17" viewBox="0 0 16.8 17"><path d="M4.500 5.500a5 5 0 1 1-1 3.500" fill="none" stroke="#eee" stroke-width="1.400"/><path d="M3 3.500l3.500 .5l-2.500 3z" fill="#eee"/><rect x="6" y="6.300" width="5.400" height="4.400" fill="#f2f2f2" transform="rotate(-20 8.700 8.500)"/></svg></div>
  <div class="tool dk" style="left:202.3px;top:281.0px;width:16.9px;height:17px"><svg width="16.9" height="17" viewBox="0 0 16.9 17"><rect x="5" y="5.500" width="7" height="6" fill="#fff"/><path d="M3.500 4l2 2M13.500 4l-2 2M3.500 13l2-2M13.500 13l-2-2" stroke="#fff" stroke-width="1.500"/></svg></div>
  <div class="tool dk" style="left:222.5px;top:281.0px;width:17px;height:17px"><svg width="17" height="17" viewBox="0 0 17 17"><path d="M12.500 5.500a5 5 0 1 0 1 3.500" fill="none" stroke="#eee" stroke-width="1.400"/><path d="M14 3.500l-3.500 .5l2.500 3z" fill="#eee"/><rect x="5.600" y="6.300" width="5.400" height="4.400" fill="#f2f2f2" transform="rotate(20 8.300 8.500)"/></svg></div>
  <div style="left:243.0px;top:285.0px;width:1px;height:9px;background:#555"></div>
  <div class="tool dk" style="left:248.0px;top:281.0px;width:17px;height:17px"><svg width="17" height="17" viewBox="0 0 17 17"><path d="M3.800 7.500l3.200-1v6h-3.200z" fill="#eee"/><path d="M10.300 7h3v5.300h-3z" fill="none" stroke="#eee" stroke-width="1.100"/><path d="M8.600 5v8.500" stroke="#ddd" stroke-width=".9"/><path d="M5.500 6c.3-3.500 6-3.500 6.300 0" fill="none" stroke="#ddd" stroke-width="1"/></svg></div>
  <div class="chk5" style="left:1px;top:301.0px;width:282px;height:32.400px"></div>
  <div class="pline" style="left:1px;top:336.6px;width:282px"></div>
  <div class="phead" style="left:1px;top:337.6px;width:282px"></div>
  <span class="sxc" style="left:90.0px;top:338.5px;width:80px;text-align:center;font-size:9px;line-height:15px;color:#ddd">Brush Size</span>
  <svg class="hic" style="left:260.0px;top:340.1px" width="20" height="10" viewBox="0 0 20 10"><path d="M6 2.500h-5v6.500h6v-5" fill="none" stroke="#ccc" stroke-width="1.100"/><path d="M5 4.500l3.500-3.500M6 .8h2.700v2.700" fill="none" stroke="#ccc" stroke-width="1"/><path d="M13.500 2l5 5.500M18.500 2l-5 5.500" stroke="#ddd" stroke-width="1.800"/></svg>
  <div style="left:1px;top:352.4px;width:282px;height:123.600px;background:#4a4a4a"></div>
  <div class="bs" style="left:1.8px;top:352.7px;height:37.3px"><i style="width:0.8px;height:0.8px;left:14.1px;top:14.7px;opacity:.45"></i><b style="top:27.6px">1</b></div>
  <div class="bs" style="left:31.8px;top:352.7px;height:37.3px"><i style="width:1.0px;height:1.0px;left:14.0px;top:14.6px;opacity:.45"></i><b style="top:27.6px">1.5</b></div>
  <div class="bs" style="left:61.8px;top:352.7px;height:37.3px"><i style="width:1.6px;height:1.6px;left:13.7px;top:14.3px"></i><b style="top:27.6px">2</b></div>
  <div class="bs" style="left:91.8px;top:352.7px;height:37.3px"><i style="width:2.2px;height:2.2px;left:13.4px;top:14.0px"></i><b style="top:27.6px">3</b></div>
  <div class="bs" style="left:121.8px;top:352.7px;height:37.3px"><i style="width:3.0px;height:3.0px;left:13.0px;top:13.6px"></i><b style="top:27.6px">4</b></div>
  <div class="bs" style="left:151.8px;top:352.7px;height:37.3px"><i style="width:3.6px;height:3.6px;left:12.7px;top:13.3px"></i><b style="top:27.6px">5</b></div>
  <div class="bs" style="left:181.8px;top:352.7px;height:37.3px"><i style="width:5.2px;height:5.2px;left:11.9px;top:12.5px"></i><b style="top:27.6px">7</b></div>
  <div class="bs" style="left:211.8px;top:352.7px;height:37.3px"><i style="width:7.4px;height:7.4px;left:10.8px;top:11.4px"></i><b style="top:27.6px">10</b></div>
  <div class="bs" style="left:1.8px;top:391.3px;height:36.3px"><i style="width:8.8px;height:8.8px;left:10.1px;top:9.8px"></i><b style="top:26.9px">12</b></div>
  <div class="bs" style="left:31.8px;top:391.3px;height:36.3px"><i style="width:11.0px;height:11.0px;left:9.0px;top:8.7px"></i><b style="top:26.9px">15</b></div>
  <div class="bs" style="left:61.8px;top:391.3px;height:36.3px"><i style="width:14.8px;height:14.8px;left:7.1px;top:6.8px"></i><b style="top:26.9px">20</b></div>
  <div class="bs" style="left:91.8px;top:391.3px;height:36.3px"><i style="width:18.0px;height:18.0px;left:5.5px;top:5.2px"></i><b style="top:26.9px">25</b></div>
  <div class="bs" style="left:121.8px;top:391.3px;height:36.3px"><i style="width:18.0px;height:18.0px;left:5.5px;top:5.2px"></i><b style="top:26.9px">30</b></div>
  <div class="bs" style="left:151.8px;top:391.3px;height:36.3px"><i style="width:18.0px;height:18.0px;left:5.5px;top:5.2px"></i><b style="top:26.9px">40</b></div>
  <div class="bs" style="left:181.8px;top:391.3px;height:36.3px"><i style="width:18.0px;height:18.0px;left:5.5px;top:5.2px"></i><b style="top:26.9px">50</b></div>
  <div class="bs" style="left:211.8px;top:391.3px;height:36.3px"><i style="width:18.0px;height:18.0px;left:5.5px;top:5.2px"></i><b style="top:26.9px">70</b></div>
  <div class="bs" style="left:1.8px;top:428.9px;height:35.6px"><i style="width:18.0px;height:18.0px;left:5.5px;top:5.1px"></i><b style="top:27.3px">100</b></div>
  <div class="bs" style="left:31.8px;top:428.9px;height:35.6px"><i style="width:18.0px;height:18.0px;left:5.5px;top:5.1px"></i><b style="top:27.3px">150</b></div>
  <div class="bs" style="left:61.8px;top:428.9px;height:35.6px"><i style="width:18.0px;height:18.0px;left:5.5px;top:5.1px"></i><b style="top:27.3px">200</b></div>
  <div class="bs" style="left:91.8px;top:428.9px;height:35.6px"><i style="width:18.0px;height:18.0px;left:5.5px;top:5.1px"></i><b style="top:27.3px">300</b></div>
  <div class="bs" style="left:121.8px;top:428.9px;height:35.6px"><i style="width:18.0px;height:18.0px;left:5.5px;top:5.1px"></i><b style="top:27.3px">400</b></div>
  <div class="bs" style="left:151.8px;top:428.9px;height:35.6px"><i style="width:18.0px;height:18.0px;left:5.5px;top:5.1px"></i><b style="top:27.3px">500</b></div>
  <div class="bs" style="left:181.8px;top:428.9px;height:35.6px"><i style="width:18.0px;height:18.0px;left:5.5px;top:5.1px"></i><b style="top:27.3px">700</b></div>
  <div class="bs" style="left:211.8px;top:428.9px;height:35.6px"><i style="width:18.0px;height:18.0px;left:5.5px;top:5.1px"></i><b style="top:27.3px">1000</b></div>
  <div style="left:266.7px;top:352.4px;width:15.300px;height:123.600px;background:#2c2c2c"></div>
  <svg style="left:266.7px;top:352.4px" width="16" height="124" viewBox="0 0 16 124"><path d="M4.500 8l3.200-5l3.200 5z" fill="#bbb"/><path d="M4.500 116l3.200 5l3.200-5z" fill="#bbb"/><rect x=".8" y="11.300" width="13.500" height="102.700" rx="5" fill="#6a6a6a"/></svg>
</div>
<div id="status" class="abs">
  <span style="left:5px">1600 * 1200 pixel</span><span style="left:76.500px">(11.6 * 8.7cm)</span><span style="left:137px">350 dpi</span><span style="left:172.500px">100 %</span><span style="left:202.500px">( 517, 788 )</span><span style="left:250.700px;transform:scaleX(.938)">Vẽ một đường thẳng bằng cách giữ phím Shift, Thay đổi cỡ cọ bằng cách giữ phím Ctrl, Alt và kéo</span>
  <div style="left:36px;top:16.500px;width:182px;height:2px;background:#fff"></div>
</div>
</body>
</html>
